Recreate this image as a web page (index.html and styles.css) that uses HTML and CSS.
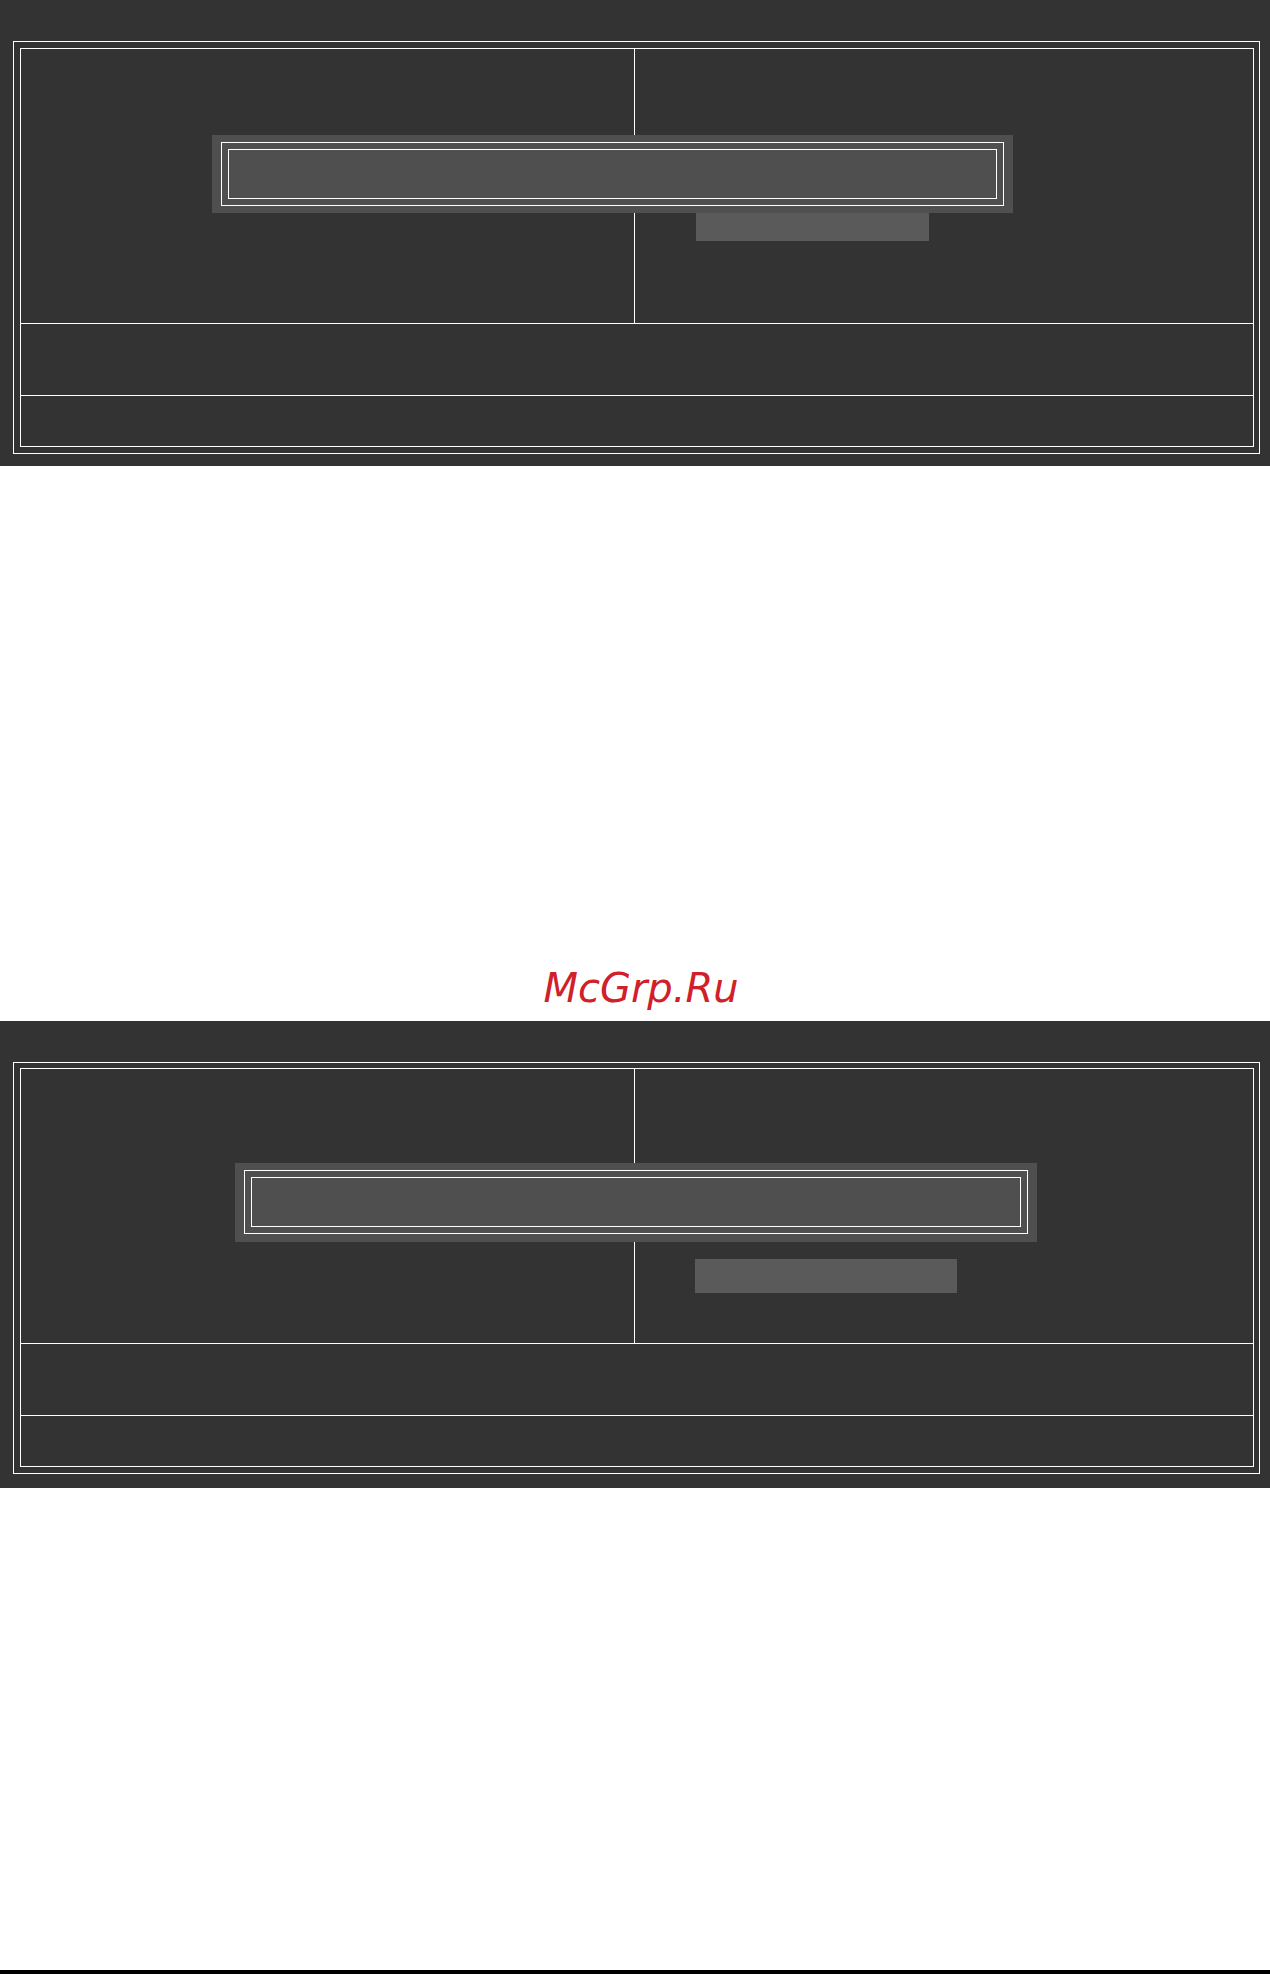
FILE: index.html
```html
<!DOCTYPE html>
<html lang="ru">
<head>
<meta charset="utf-8">
<title>BIOS screens</title>
<link rel="stylesheet" href="styles.css">
</head>
<body>
<div class="page">
  <section class="panel panel-one">
    <div class="frame-outer">
      <div class="frame-inner">
        <div class="region-top">
          <div class="col col-left"></div>
          <div class="col col-right"></div>
          <div class="dialog dialog-one">
            <div class="dialog-outer">
              <div class="dialog-inner"></div>
            </div>
          </div>
          <div class="hint hint-one"></div>
        </div>
        <div class="region-mid"></div>
        <div class="region-bot"></div>
      </div>
    </div>
  </section>

  <div class="gap">
    <div class="watermark">McGrp.Ru</div>
  </div>

  <section class="panel panel-two">
    <div class="frame-outer">
      <div class="frame-inner">
        <div class="region-top">
          <div class="col col-left"></div>
          <div class="col col-right"></div>
          <div class="dialog dialog-two">
            <div class="dialog-outer">
              <div class="dialog-inner"></div>
            </div>
          </div>
          <div class="hint hint-two"></div>
        </div>
        <div class="region-mid"></div>
        <div class="region-bot"></div>
      </div>
    </div>
  </section>

  <div class="tail"></div>
  <div class="rule"></div>
</div>
</body>
</html>
```

FILE: styles.css
```css
* {
  box-sizing: border-box;
}

html, body {
  margin: 0;
  padding: 0;
  background: #ffffff;
}

.page {
  width: 1270px;
  display: flex;
  flex-direction: column;
}

.panel {
  background: #333333;
  padding: 41px 10px 0 13px;
}

.panel-one {
  height: 466px;
}

.panel-two {
  height: 467px;
}

.frame-outer {
  border: 1px solid #ffffff;
  padding: 6px 5px 6px 6px;
}

.panel-two .frame-outer {
  padding-top: 5px;
}

.frame-inner {
  border: 1px solid #ffffff;
  display: flex;
  flex-direction: column;
}

.region-top {
  position: relative;
  height: 275px;
  display: flex;
  border-bottom: 1px solid #ffffff;
}

.col {
  height: 100%;
}

.col-left {
  width: 614px;
  border-right: 1px solid #ffffff;
}

.col-right {
  flex: 1;
}

.region-mid {
  height: 72px;
  border-bottom: 1px solid #ffffff;
}

.region-bot {
  height: 50px;
}

.dialog {
  position: absolute;
  background: #4f4f4f;
  padding: 7px 9px;
}

.dialog-outer {
  border: 1px solid #ffffff;
  padding: 6px;
}

.dialog-inner {
  border: 1px solid #ffffff;
  height: 50px;
}

.dialog-one {
  left: 191px;
  top: 86px;
  width: 801px;
  height: 78px;
}

.dialog-two {
  left: 214px;
  top: 94px;
  width: 802px;
  height: 79px;
}

.hint {
  position: absolute;
  background: #5a5a5a;
}

.hint-one {
  left: 675px;
  top: 164px;
  width: 233px;
  height: 28px;
}

.hint-two {
  left: 674px;
  top: 190px;
  width: 262px;
  height: 34px;
}

.gap {
  height: 555px;
  display: flex;
  flex-direction: column;
  justify-content: flex-end;
  padding-bottom: 13px;
}

.watermark {
  font-family: "DejaVu Sans", "Liberation Sans", sans-serif;
  font-style: italic;
  font-size: 40px;
  line-height: 40px;
  color: #d0202a;
  text-align: center;
  padding-left: 12px;
}

.tail {
  height: 482px;
}

.rule {
  height: 4px;
  background: #000000;
}
```
